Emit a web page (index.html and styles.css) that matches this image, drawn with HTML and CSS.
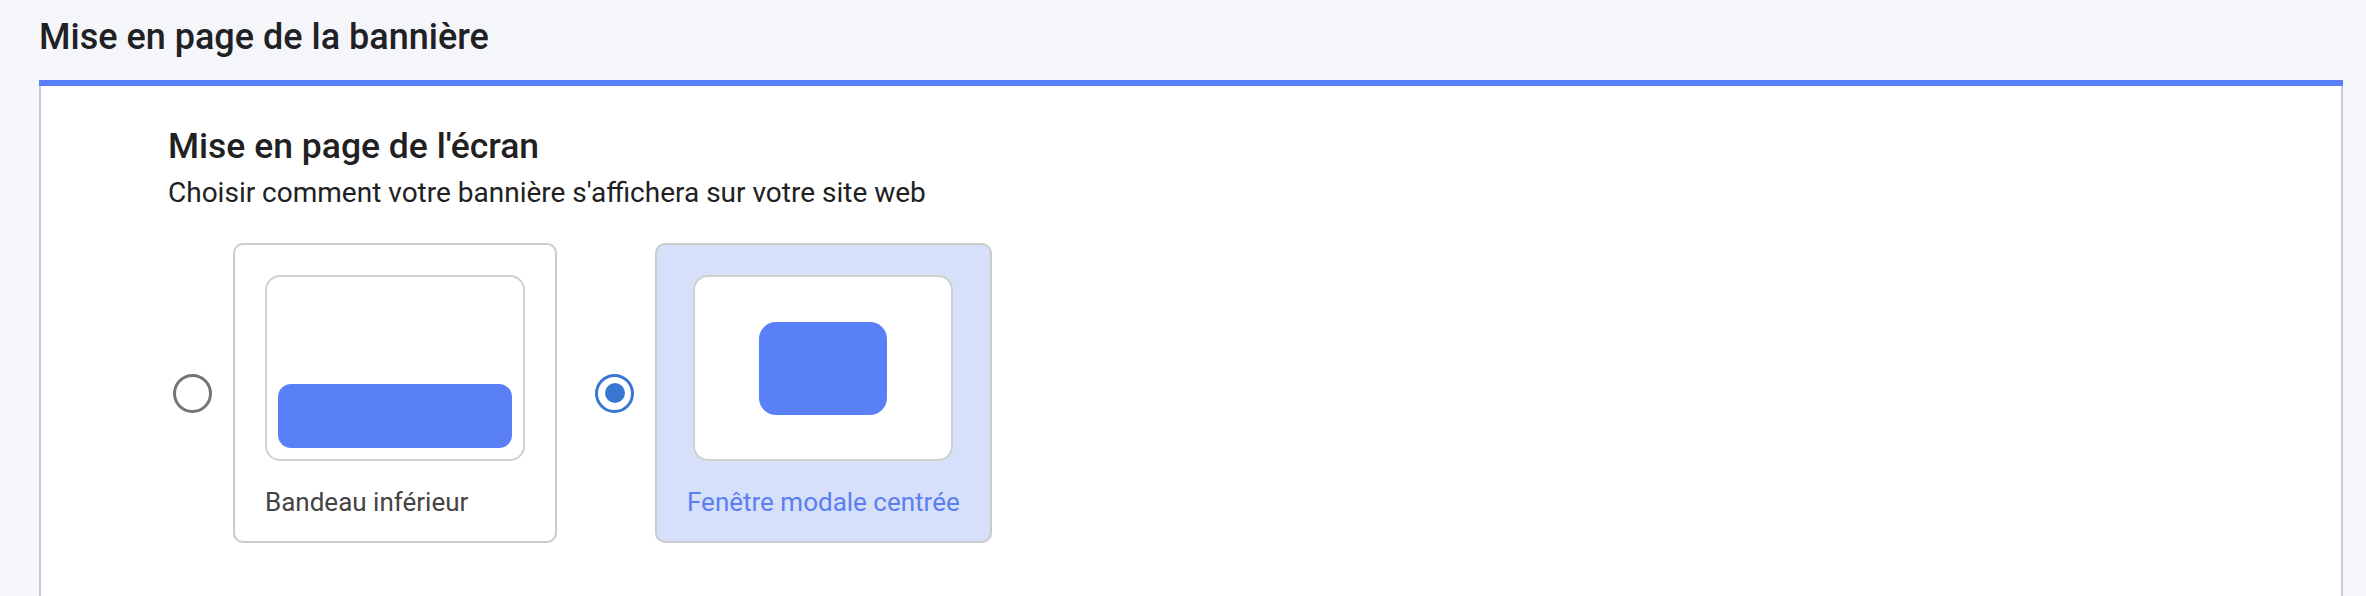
FILE: index.html
```html
<!DOCTYPE html>
<html lang="fr">
<head>
<meta charset="utf-8">
<title>Mise en page de la bannière</title>
<link rel="stylesheet" href="styles.css">
</head>
<body>
  <h1 class="page-title">Mise en page de la bannière</h1>
  <section class="panel">
    <div class="panel-body">
      <h2 class="section-title">Mise en page de l'écran</h2>
      <p class="section-desc">Choisir comment votre bannière s'affichera sur votre site web</p>
      <div class="options">
        <label class="option">
          <span class="radio"></span>
          <span class="card">
            <span class="preview preview-bottom"><span class="bar"></span></span>
            <span class="card-label">Bandeau inférieur</span>
          </span>
        </label>
        <label class="option option-selected">
          <span class="radio"><span class="radio-dot"></span></span>
          <span class="card">
            <span class="preview preview-center"><span class="modal"></span></span>
            <span class="card-label">Fenêtre modale centrée</span>
          </span>
        </label>
      </div>
    </div>
  </section>
</body>
</html>
```
FILE: styles.css
```css
html, body {
  margin: 0;
  background: #f5f6fa;
}
body {
  font-family: Roboto, "Liberation Sans", Arial, sans-serif;
  padding: 16px 23px 0 39px;
  overflow: hidden;
}
.page-title {
  margin: 0 0 22px;
  font-size: 36px;
  line-height: 42px;
  font-weight: 500;
  color: #202124;
}
.panel {
  border-top: 6px solid #5a80f8;
}
.panel-body {
  background: #ffffff;
  border-left: 2px solid #c6cbd6;
  border-right: 2px solid #c6cbd6;
  padding: 39px 0 80px 127px;
}
.section-title {
  margin: 0;
  font-size: 35.5px;
  line-height: 42px;
  font-weight: 500;
  color: #212121;
}
.section-desc {
  margin: 9px 0 0;
  font-size: 28px;
  line-height: 34px;
  color: #212121;
}
.options {
  display: flex;
  gap: 33px;
  margin-top: 33px;
}
.option {
  display: flex;
  align-items: center;
  cursor: pointer;
}
.radio {
  box-sizing: border-box;
  width: 39px;
  height: 39px;
  margin: 0 21px 0 5px;
  border: 3.5px solid #757575;
  border-radius: 50%;
  display: flex;
  align-items: center;
  justify-content: center;
}
.option-selected .radio {
  border-color: #3a77d1;
}
.radio-dot {
  width: 20px;
  height: 20px;
  border-radius: 50%;
  background: #3a77d1;
}
.card {
  display: flex;
  flex-direction: column;
  align-items: flex-start;
  border: 2px solid #cbcbcb;
  border-radius: 10px;
  padding: 30px 30px 24px;
  background: #ffffff;
}
.option-selected .card {
  background: #d6e0fa;
}
.preview {
  align-self: center;
  box-sizing: border-box;
  width: 260px;
  height: 186px;
  border: 2px solid #d0d0d0;
  border-radius: 15px;
  background: #ffffff;
  padding: 11px;
  display: flex;
}
.preview-bottom {
  flex-direction: column;
  justify-content: flex-end;
}
.bar {
  height: 64px;
  border-radius: 13px;
  background: #5a80f8;
}
.preview-center {
  align-items: center;
  justify-content: center;
}
.modal {
  width: 128px;
  height: 93px;
  border-radius: 17px;
  background: #5a80f8;
}
.card-label {
  margin-top: 26px;
  font-size: 26px;
  line-height: 30px;
  color: #444444;
}
.option-selected .card-label {
  color: #5b7ff0;
}
```
